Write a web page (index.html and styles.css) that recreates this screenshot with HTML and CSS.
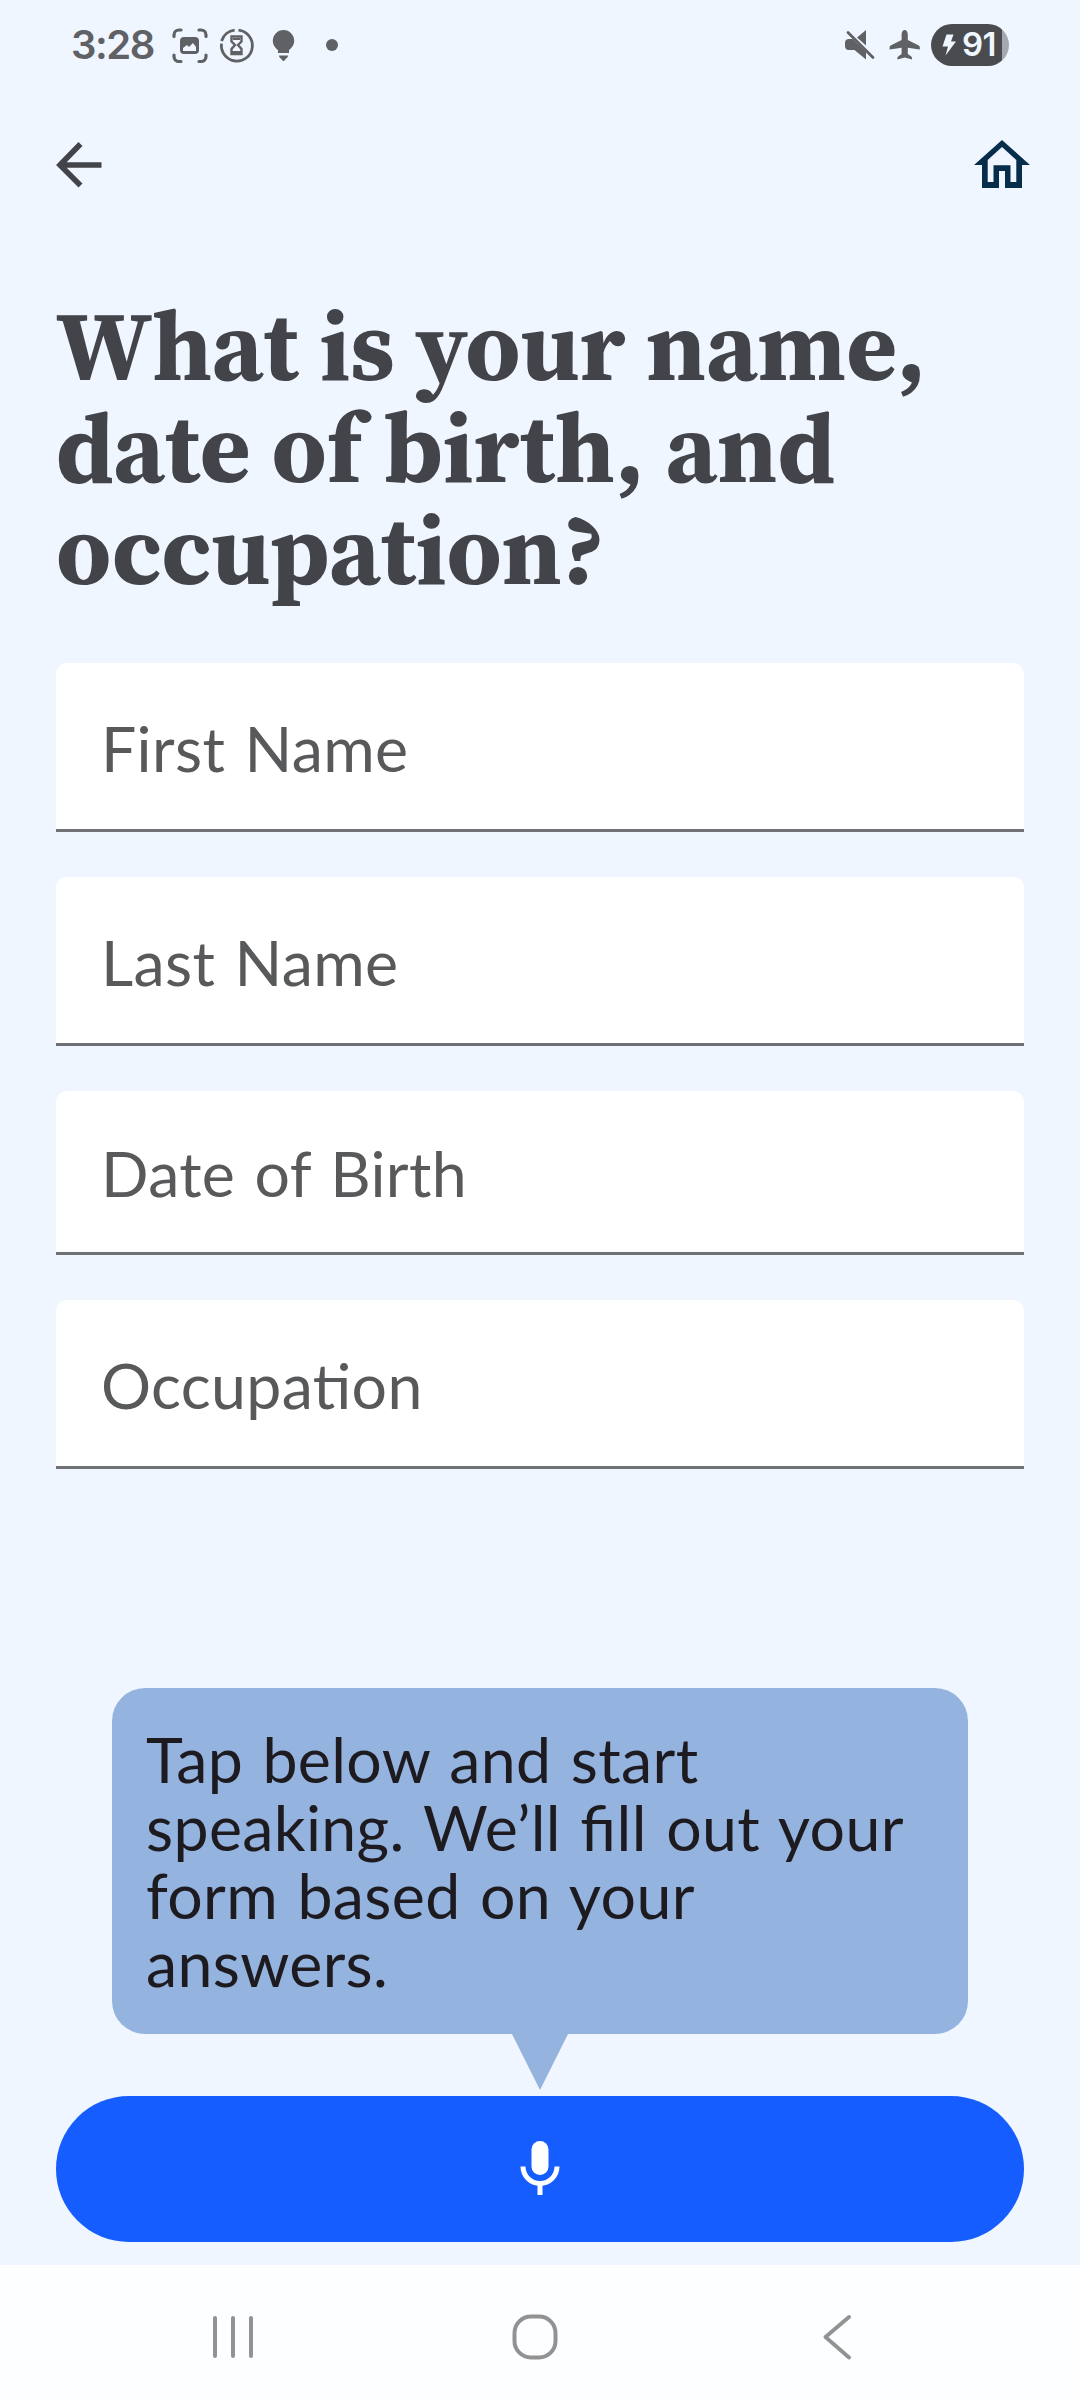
FILE: index.html
```html
<!DOCTYPE html>
<html lang="en">
<head>
<meta charset="utf-8">
<title>Your details</title>
<link rel="stylesheet" href="styles.css">
</head>
<body>
<div class="screen">
  <header class="status">
    <span class="clock">3:28</span>
    <svg class="status-left" width="172" height="40" viewBox="168 25 172 40">
      <g fill="none" stroke="#606165" stroke-width="3.2" stroke-linecap="round">
        <path d="M174 36.500v-1.500a5 5 0 0 1 5-5h2M199 30h2a5 5 0 0 1 5 5v1.500M174 55v1.500a5 5 0 0 0 5 5h2M199 61.500h2a5 5 0 0 0 5-5v-1.500"/>
        <path stroke-linecap="butt" stroke-width="2.800" d="M238.500 30.200a15.500 15.500 0 1 1-17 13.500M221.600 41a15.500 15.500 0 0 1 13-10.800"/>
      </g>
      <path fill="#606165" fill-rule="evenodd" d="M184 37h11a4 4 0 0 1 4 4v9a4 4 0 0 1-4 4h-11a4 4 0 0 1-4-4v-9a4 4 0 0 1 4-4ZM183 48v3h13v-4l-3-4-4 4-2-2Z"/>
      <path fill="none" stroke="#606165" stroke-width="2.400" d="M231.500 36.500h10v5l-3.500 3.500 3.500 4v5h-10v-5l3.500-4-3.500-3.500Z"/>
      <path fill="#606165" d="M232 51h9v4h-9ZM233 38h7v2h-7Z"/>
      <path fill="#606165" d="M283.500 30a10.700 10.700 0 0 1 10.700 10.700c0 4.300-2.500 7-5.200 9.300v3h-11v-3c-2.700-2.300-5.200-5-5.200-9.300A10.700 10.700 0 0 1 283.500 30ZM279 55.500h9c0 2-1.500 3-2.500 3.500-.5 1.300-1 2-2 2s-1.500-.7-2-2c-1-.5-2.500-1.500-2.500-3.500Z"/>
      <circle cx="332" cy="45" r="6" fill="#606165"/>
    </svg>
    <svg class="status-right" width="78" height="36" viewBox="844 28 78 36">
      <path fill="#606165" d="M845 44q0-4 4-4h3.500L866 53v7.500L854.500 51H849q-4 0-4-4ZM857 38.500 866 31v15.500Z"/>
      <path fill="none" stroke="#606165" stroke-width="2.800" stroke-linecap="round" d="M848 33.500 873 58.500"/>
      <path fill="#606165" d="M904.700 31c1.700 0 3.100 2 3.100 4.500V41l11 5.500q1 .5 1 2v2l-12-1.800V55l3.500 2.500q1 1 .8 3l-7.400-2-7.400 2q-.2-2 .8-3L901.600 55v-6.300l-12 1.800v-2q0-1.500 1-2L901.600 41v-5.500C901.600 33 903 31 904.700 31Z"/>
    </svg>
    <div class="battery">
      <svg width="15" height="22" viewBox="0 0 15 22"><path fill="#eff6ff" d="M4.500.5h7L9 7.500h5L3.500 21.500 6 12.500H.5Z"/></svg>
      <span>91</span>
    </div>
  </header>
  <nav class="appbar">
    <svg width="46" height="46" viewBox="0 0 46 46"><path fill="none" stroke="#434449" stroke-width="5.600" d="M45.500 23H4M24.500 2 4 23 24.500 43.500"/></svg>
    <svg width="56" height="50" viewBox="0 0 56 50"><path fill="#062e4b" fill-rule="evenodd" d="M28 0 56 25h-8V48H31V31h-6v17H8V25H0ZM28 7 13.700 20V42H19.500V25.200h17V42h5.800V20Z"/></svg>
  </nav>
  <main class="content">
    <h1 class="title">What is your name, date of birth, and occupation?</h1>
    <form class="form">
      <div class="field">First Name</div>
      <div class="field">Last Name</div>
      <div class="field short">Date of Birth</div>
      <div class="field">Occupation</div>
    </form>
  </main>
  <footer class="voice">
    <div class="bubble">Tap below and start<br>speaking. We’ll fill out your<br>form based on your<br>answers.</div>
    <svg class="tail" width="56" height="56" viewBox="0 0 56 56"><path fill="#94b3df" d="M0 0h56L28 56Z"/></svg>
    <button class="mic" type="button" aria-label="Speak">
      <svg width="40" height="54" viewBox="0 0 40 54"><rect x="11.500" y="0" width="17" height="34" rx="8.500" fill="#fff"/><path fill="none" stroke="#fff" stroke-width="5" d="M3 25.500a17 17 0 0 0 34 0M20 42v12"/></svg>
    </button>
  </footer>
  <nav class="sysnav">
    <svg width="44" height="44" viewBox="0 0 44 44"><path fill="none" stroke="#929292" stroke-width="4" stroke-linecap="round" d="M4 3v38M22 3v38M40 3v38"/></svg>
    <svg width="48" height="48" viewBox="0 0 48 48"><rect x="3.500" y="3.500" width="41" height="41" rx="16.500" fill="none" stroke="#929292" stroke-width="4"/></svg>
    <svg width="30" height="46" viewBox="0 0 30 46"><path fill="none" stroke="#929292" stroke-width="3.800" stroke-linecap="round" stroke-linejoin="round" d="M27 3 3.500 23 27 43.500"/></svg>
  </nav>
</div>
</body>
</html>
```
FILE: styles.css
```css
* { box-sizing: border-box; }
body { margin: 0; }
svg { display: block; flex: none; }
.screen { width: 1080px; height: 2400px; display: flex; flex-direction: column; background: #eff6ff; font-family: Lato, Carlito, sans-serif; }
.status { height: 90px; display: flex; align-items: center; padding: 0 71px 0 71px; }
.clock { width: 97px; font: 600 40px/40px Inter, sans-serif; letter-spacing: -1.5px; color: #606165; }
.status-right { margin-left: auto; }
.battery { width: 78px; height: 42px; margin-left: 9px; padding-left: 11px; display: flex; align-items: center; gap: 5px; border-radius: 21px; background: linear-gradient(90deg, #4a4b4e 71px, #a4a8af 71px); color: #eff6ff; font: 600 33px/40px Inter, sans-serif; letter-spacing: -0.5px; }
.battery span { margin-top: -2px; }
.appbar { height: 150px; display: flex; justify-content: space-between; align-items: center; padding: 0 50px 0 56px; }
.content { padding: 55px 56px 0; }
.title { margin: 0; font: 700 97.8px/102px "Source Serif 4", "Source Serif Pro", "Liberation Serif", serif; color: #434449; }
.form { margin-top: 62px; display: flex; flex-direction: column; gap: 45px; }
.field { height: 169px; padding: 0 45px; border-bottom: 3px solid #707175; border-radius: 11px 11px 0 0; background: #fff; font-size: 62.6px; line-height: 170px; letter-spacing: 0.35px; word-spacing: 3px; font-feature-settings: "liga" 1; color: #58595b; }
.field.short { height: 164px; line-height: 164px; }
.voice { margin-top: auto; display: flex; flex-direction: column; align-items: center; padding: 0 56px 23px; }
.bubble { width: 856px; height: 346px; padding: 37px 34px; border-radius: 33px; background: #94b3df; color: #1d1b20; font-size: 62.6px; line-height: 68px; letter-spacing: 0.35px; word-spacing: 3px; font-feature-settings: "liga" 1; white-space: nowrap; }
.mic { width: 968px; height: 146px; margin-top: 6px; padding: 0 0 3px; display: flex; align-items: center; justify-content: center; border: 0; border-radius: 73px; background: #155dfe; }
.sysnav { height: 135px; padding: 8px 228px 0 211px; display: grid; grid-template-columns: 44px 48px 30px; column-gap: 256px; align-items: center; background: #fdfeff; }
.sysnav :last-child { margin-left: 7px; }
```
